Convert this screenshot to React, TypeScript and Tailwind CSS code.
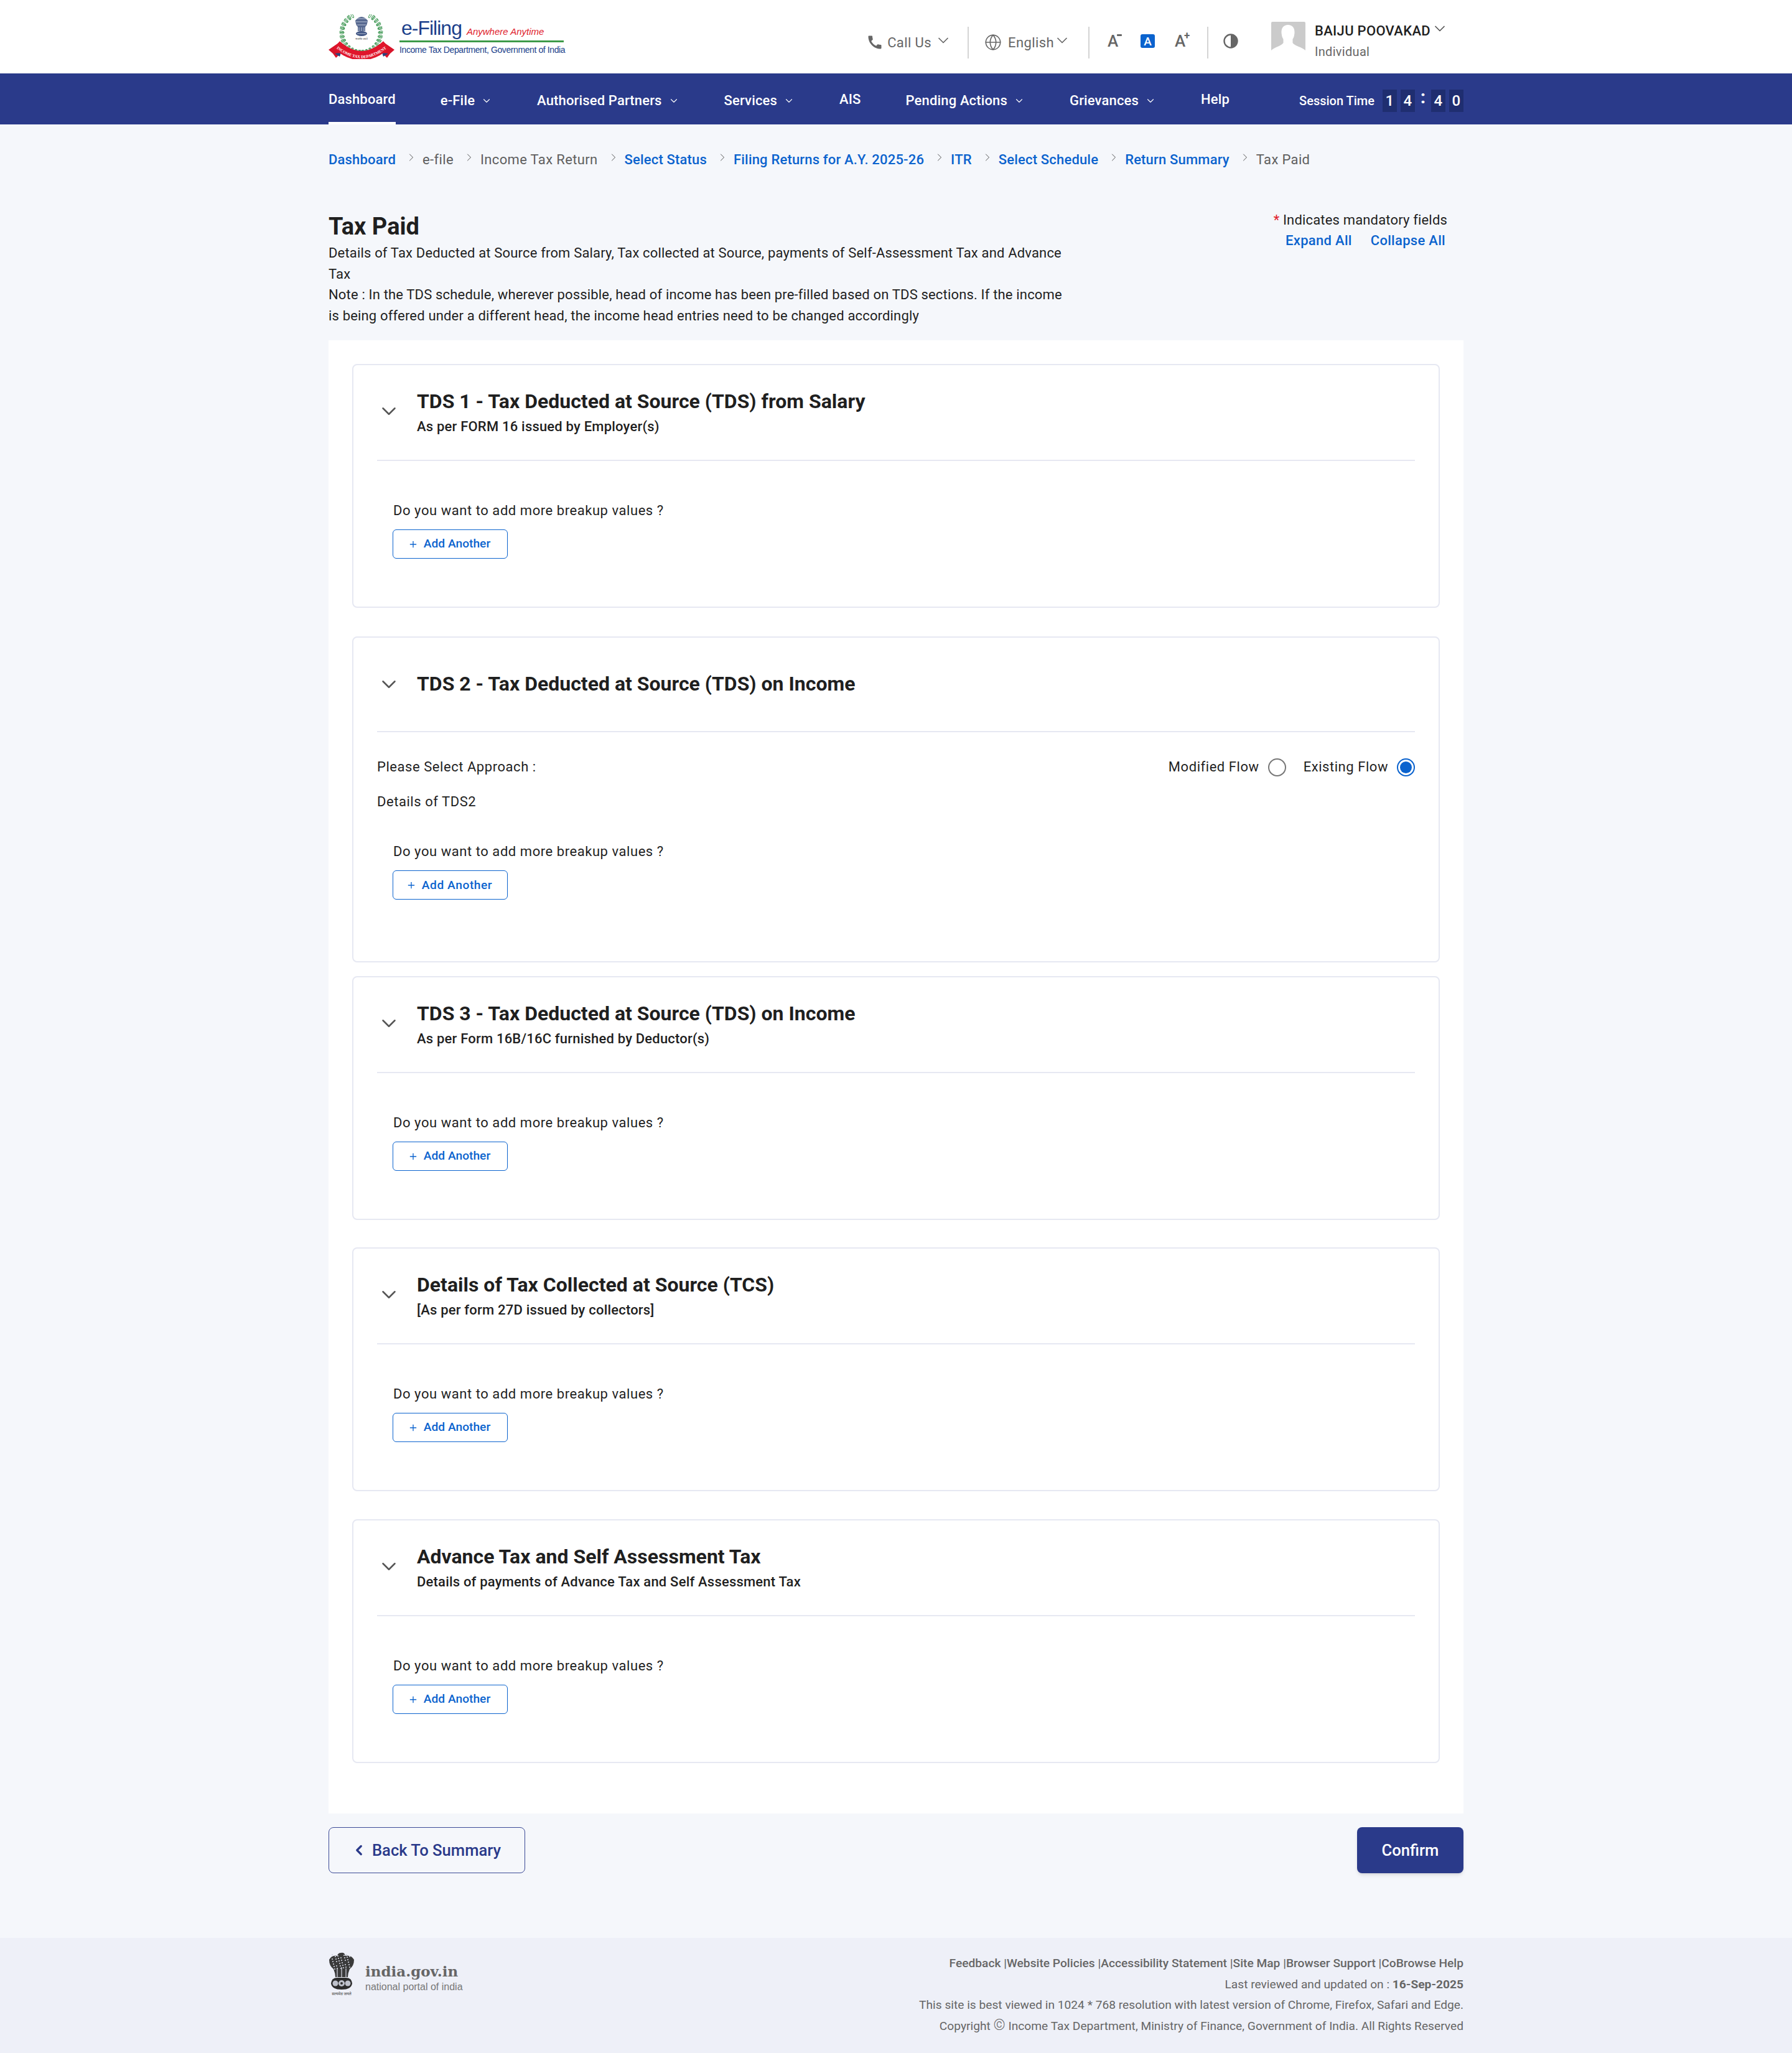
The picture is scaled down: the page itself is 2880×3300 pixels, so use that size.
import { ChevronDown, ChevronLeft, ChevronRight, Globe, Plus } from 'lucide-react';
import { MdCall } from 'react-icons/md';

// ============================================
// Logos
// ============================================

const wreathLeaves = Array.from({ length: 26 }, (_, i) => {
  const side = i < 13 ? -1 : 1;
  const step = i % 13;
  const angle = ((12 + step * 12.5) * Math.PI) / 180;
  const r = 31;
  return {
    x: 52.5 + side * r * Math.sin(angle + 0.35),
    y: 27 - r * Math.cos(angle + 0.35) + 3,
    rot: side * (step * 12.5 + 30),
    key: i,
  };
});

const DeptEmblem = () => (
  <svg width="106" height="72" viewBox="0 0 106 72" className="shrink-0">
    {wreathLeaves.map((l) => (
      <g key={l.key} transform={`translate(${l.x} ${l.y}) rotate(${l.rot})`}>
        <ellipse cx="-2.6" cy="0" rx="1.4" ry="3.6" fill="none" stroke="#2f8f46" strokeWidth="0.9" />
        <ellipse cx="2.6" cy="0" rx="1.4" ry="3.6" fill="none" stroke="#2f8f46" strokeWidth="0.9" />
      </g>
    ))}
    <path d="M43 10 Q53 -2 63 10 Q62 18 59 20 L59 27 L47 27 L47 20 Q44 18 43 10Z" fill="#56688f" />
    <path d="M46 7h14M44 12h18M46 17h14M49 21v6M53 21v6M57 21v6" stroke="#c7cfe0" strokeWidth="0.9" />
    <ellipse cx="53" cy="31" rx="9" ry="4" fill="#3f5483" />
    <path d="M46 31h14" stroke="#c7cfe0" strokeWidth="0.9" />
    <text x="53" y="41" textAnchor="middle" fontSize="4" fill="#555" fontFamily="'Noto Sans', sans-serif">
      सत्यमेव जयते
    </text>
    <path d="M0 57 L16 46 L20 62 L12 70 L7 63Z" fill="#d8142a" />
    <path d="M106 57 L90 46 L86 62 L94 70 L99 63Z" fill="#d8142a" />
    <path d="M10 63 L20 62 L18 68Z" fill="#27457f" />
    <path d="M96 63 L86 62 L88 68Z" fill="#27457f" />
    <path d="M13 49 Q53 84 93 49" fill="none" stroke="#e0162b" strokeWidth="15" />
    <path id="dept-ribbon-text" d="M6 49 Q53 92 100 49" fill="none" />
    <text fontSize="6.4" fontWeight="700" fill="#fff" fontFamily="'Liberation Serif', serif">
      <textPath href="#dept-ribbon-text" startOffset="50%" textAnchor="middle">
        INCOME TAX DEPARTMENT
      </textPath>
    </text>
  </svg>
);

const lionDots = Array.from({ length: 34 }, (_, i) => ({
  x: 6 + ((i * 7) % 29),
  y: 4 + ((i * 11) % 24),
  key: i,
}));

const NationalEmblem = () => (
  <svg width="42" height="70" viewBox="0 0 42 70" className="shrink-0">
    <path
      d="M20 1 Q26 0 27 6 Q36 4 41 12 Q41 22 34 27 Q31 34 31 40 L11 40 Q11 34 8 27 Q1 22 1 12 Q6 4 14 6 Q15 1 20 1Z"
      fill="#3a3a3a"
    />
    {lionDots.map((d) => (
      <circle key={d.key} cx={d.x} cy={d.y} r="1.1" fill="#cfd2db" />
    ))}
    <path d="M14 26v14M21 24v16M28 26v14" stroke="#d8dae4" strokeWidth="1.2" />
    <path d="M4 50 Q5 41 14 41 L28 41 Q37 41 38 50 Q37 60 21 60 Q5 60 4 50Z" fill="#2d2d2d" />
    <circle cx="11" cy="50" r="4.5" fill="#bfc2cc" />
    <circle cx="21" cy="50" r="5" fill="#bfc2cc" />
    <circle cx="31" cy="50" r="4.5" fill="#bfc2cc" />
    <circle cx="21" cy="50" r="2" fill="#333" />
    <text x="21" y="69" textAnchor="middle" fontSize="6.5" fill="#444" fontFamily="'Noto Sans', sans-serif">
      सत्यमेव जयते
    </text>
  </svg>
);

const Avatar = () => (
  <svg width="55" height="55" viewBox="0 0 55 55" className="shrink-0 -mt-[11px]">
    <path d="M2 0 H53 Q55 0 55 2 V52 L0 52 V2 Q0 0 2 0Z" fill="#cbcbcb" />
    <path
      d="M27 5 C20 5 16 10 16.5 18 C17 23 18 26 19.5 28 L19.5 34 C16 39 5 41 0 46 L0 55 L55 55 L55 46 C50 41 38 39 34.5 34 L34.5 28 C36 26 37 23 37.5 18 C38 10 34 5 27 5Z"
      fill="#fff"
    />
  </svg>
);

const ContrastIcon = () => (
  <svg width="24" height="24" viewBox="0 0 24 24" className="shrink-0">
    <circle cx="12" cy="12" r="10.5" fill="#fff" stroke="#666" strokeWidth="2.4" />
    <path d="M12 1.5 A10.5 10.5 0 0 1 12 22.5Z" fill="#666" />
  </svg>
);

// ============================================
// Top header
// ============================================

const Separator = () => <div className="w-[2px] h-[51px] bg-[#d4d4d4] shrink-0" />;

const TopBar = () => (
  <header className="h-[118px] bg-white">
    <div className="w-[1824px] mx-auto h-full flex items-center">
      <div className="flex items-center mt-[-1px]">
        <DeptEmblem />
        <div className="ml-[8px] w-[264px] flex flex-col font-['Liberation_Sans',sans-serif]">
          <div className="flex items-baseline pl-[3px] h-[34px]">
            <span className="text-[32px] leading-[34px] tracking-[-1px] text-[#1b3f8b]">e-Filing</span>
            <span className="ml-[8px] text-[15px] italic text-[#e01b2b]">Anywhere Anytime</span>
          </div>
          <div className="h-[3px] bg-[#3d9a48] mt-[3px]" />
          <div className="text-[14px] leading-[20px] tracking-[-0.4px] mt-[2px] text-[#1b3f8b] whitespace-nowrap">
            Income Tax Department, Government of India
          </div>
        </div>
      </div>

      <div className="ml-auto flex items-center mt-[18px] text-[#666] text-[22px] tracking-[0.4px]">
        <MdCall size={28} className="text-[#666] mr-[6px]" />
        <span>Call Us</span>
        <ChevronDown size={28} strokeWidth={1.5} className="ml-[5px] mr-[25px] -mt-[6px]" />
        <Separator />
        <Globe size={28} strokeWidth={1.4} className="ml-[25px] mr-[10px]" />
        <span>English</span>
        <ChevronDown size={28} strokeWidth={1.5} className="-ml-[1px] mr-[28px] -mt-[6px]" />
        <Separator />
        <span className="ml-[29px] w-[24px] text-[26px] leading-[28px] tracking-normal font-medium relative -mt-[4px]">
          A<span className="absolute left-[15px] top-[3px] w-[8px] h-[3px] bg-[#666] rounded-[1px]" />
        </span>
        <span className="ml-[29px] w-[23px] h-[22px] bg-[#0b63ce] rounded-[3px] text-white text-[19px] leading-[23px] tracking-normal text-center font-medium -mt-[4px]">
          A
        </span>
        <span className="ml-[32px] w-[24px] text-[26px] leading-[28px] tracking-normal font-medium relative -mt-[4px]">
          A<span className="absolute left-[15px] top-[-3px] text-[17px] leading-[17px] font-bold">+</span>
        </span>
        <span className="w-[28px]" />
        <Separator />
        <span className="ml-[24px] -mt-[4px]">
          <ContrastIcon />
        </span>
        <span className="ml-[53px]">
          <Avatar />
        </span>
        <div className="ml-[15px] w-[239px] flex flex-col -mt-[5px] tracking-[0.3px]">
          <div className="flex items-center h-[30px] text-[#1f1f1f] font-medium text-[22px] whitespace-nowrap">
            BAIJU POOVAKAD
            <ChevronDown size={28} strokeWidth={1.5} className="ml-[1px] -mt-[6px] text-[#555]" />
          </div>
          <div className="text-[20px] leading-[28px] mt-[5px] text-[#666]">Individual</div>
        </div>
      </div>
    </div>
  </header>
);

// ============================================
// Main nav
// ============================================

const navItems = [
  { label: 'Dashboard', active: true },
  { label: 'e-File', caret: true },
  { label: 'Authorised Partners', caret: true },
  { label: 'Services', caret: true },
  { label: 'AIS' },
  { label: 'Pending Actions', caret: true },
  { label: 'Grievances', caret: true },
  { label: 'Help' },
];

const Digit = ({ value, className = '' }: { value: string; className?: string }) => (
  <span
    className={`w-[23px] h-[36px] bg-[#1f2e70] text-[24px] leading-[36px] text-center font-medium ${className}`}
  >
    {value}
  </span>
);

const NavBar = () => (
  <nav className="h-[82px] bg-[#2a3a8a]">
    <div className="w-[1824px] mx-auto h-full flex items-stretch text-white font-medium text-[22px] tracking-[0.15px]">
      <div className="flex items-stretch gap-[72px]">
        {navItems.map((item) => (
          <div
            key={item.label}
            className={
              item.active
                ? 'flex items-center border-b-[4px] border-white pt-[4px]'
                : item.caret
                  ? 'flex items-center pt-[5px]'
                  : 'flex items-center'
            }
          >
            <span>{item.label}</span>
            {item.caret && <ChevronDown size={18} strokeWidth={1.5} className="ml-[10px] mt-[1px]" />}
          </div>
        ))}
      </div>
      <div className="ml-auto flex items-center pt-[6px]">
        <span className="text-[20px] mr-[13px] tracking-normal">Session Time</span>
        <Digit value="1" />
        <Digit value="4" className="ml-[6px]" />
        <span className="w-[26px] text-center text-[30px] font-bold leading-[36px] -mt-[12px]">:</span>
        <Digit value="4" />
        <Digit value="0" className="ml-[6px]" />
      </div>
    </div>
  </nav>
);

// ============================================
// Breadcrumb
// ============================================

const crumbs = [
  { label: 'Dashboard', link: true },
  { label: 'e-file' },
  { label: 'Income Tax Return' },
  { label: 'Select Status', link: true },
  { label: 'Filing Returns for A.Y. 2025-26', link: true },
  { label: 'ITR', link: true },
  { label: 'Select Schedule', link: true },
  { label: 'Return Summary', link: true },
  { label: 'Tax Paid' },
];

const Breadcrumb = () => (
  <div className="h-[112px] flex items-center text-[22px]">
    {crumbs.map((c, i) => (
      <div key={c.label} className="flex items-center">
        {i > 0 && <ChevronRight size={20} strokeWidth={1.2} className="ml-[15px] mr-[8px] -mt-[6px] text-[#555]" />}
        <span className={c.link ? 'text-[#0b63ce] font-medium tracking-[0.18px]' : 'text-[#5f5f5f] tracking-[0.35px]'}>
          {c.label}
        </span>
      </div>
    ))}
  </div>
);

// ============================================
// Schedule cards
// ============================================

const AddAnother = () => (
  <>
    <p className="text-[22px] leading-[34px] tracking-[0.55px] text-[#1f1f1f]">Do you want to add more breakup values ?</p>
    <button className="-ml-[1px] mt-[13px] w-[185px] h-[47px] pr-[3px] border-[1.5px] border-[#0b63ce] rounded-[6px] bg-white flex items-center justify-center text-[#0b63ce] text-[19.2px] font-medium">
      <Plus size={16} strokeWidth={2} className="mr-[9px]" />
      Add Another
    </button>
  </>
);

interface ScheduleCardProps {
  title: string;
  subtitle?: string;
  className?: string;
}

const ScheduleCard = ({ title, subtitle, className = '' }: ScheduleCardProps) => (
  <section className={`border-2 border-[#e6e8f2] rounded-[8px] h-[392px] ${className}`}>
    <div className="mx-[38px] h-[154px] border-b-2 border-[#e6e8f2] flex items-center">
      <ChevronDown size={38} strokeWidth={1.6} className="text-[#555] -mt-[4px]" />
      <div className="ml-[26px] pt-[2px]">
        <h2 className="text-[32px] leading-[40px] font-bold text-[#1f1f1f]">{title}</h2>
        <p className="mt-[4px] text-[22px] leading-[34px] tracking-[0.2px] font-medium text-[#1f1f1f]">{subtitle}</p>
      </div>
    </div>
    <div className="pl-[64px] pt-[63px]">
      <AddAnother />
    </div>
  </section>
);

const Tds2Card = () => (
  <section className="border-2 border-[#e6e8f2] rounded-[8px] h-[524px] mt-[46px] mb-[22px]">
    <div className="mx-[38px] h-[152px] border-b-2 border-[#e6e8f2] flex items-center">
      <ChevronDown size={38} strokeWidth={1.6} className="text-[#555]" />
      <h2 className="ml-[26px] -mt-[2px] text-[32px] leading-[40px] font-bold text-[#1f1f1f]">
        TDS 2 - Tax Deducted at Source (TDS) on Income
      </h2>
    </div>
    <div className="mx-[38px] pt-[39px] text-[22px] leading-[34px] tracking-[0.55px] text-[#1f1f1f]">
      <div className="flex items-center">
        <span>Please Select Approach :</span>
        <div className="ml-auto flex items-center">
          <span>Modified Flow</span>
          <span className="ml-[14px] w-[29px] h-[29px] rounded-full border-2 border-[#777] bg-white" />
          <span className="ml-[28px]">Existing Flow</span>
          <span className="ml-[14px] w-[29px] h-[29px] rounded-full border-2 border-[#0b63ce] bg-white flex items-center justify-center">
            <span className="w-[19px] h-[19px] rounded-full bg-[#0b63ce]" />
          </span>
        </div>
      </div>
      <p className="mt-[22px]">Details of TDS2</p>
      <div className="pl-[26px] pt-[46px]">
        <AddAnother />
      </div>
    </div>
  </section>
);

// ============================================
// Footer
// ============================================

const Footer = () => (
  <footer className="h-[185px] bg-[#eef0f8]">
    <div className="w-[1824px] mx-auto flex justify-between">
      <div className="flex items-start pt-[23px]">
        <NationalEmblem />
        <div className="ml-[17px] pt-[16px]">
          <div className="font-['DejaVu_Serif',serif] font-bold text-[23px] leading-[30px] text-[#666]">india.gov.in</div>
          <div className="font-['Liberation_Sans',sans-serif] text-[16px] leading-[20px] text-[#777]">
            national portal of india
          </div>
        </div>
      </div>
      <div className="pt-[24px] text-right text-[19.2px] leading-[33.6px] text-[#666]">
        <p className="font-medium">
          Feedback |Website Policies |Accessibility Statement |Site Map |Browser Support |CoBrowse Help
        </p>
        <p>
          Last reviewed and updated on : <span className="font-bold">16-Sep-2025</span>
        </p>
        <p>This site is best viewed in 1024 * 768 resolution with latest version of Chrome, Firefox, Safari and Edge.</p>
        <p>
          Copyright <span className="text-[24px] leading-none font-light">©</span> Income Tax Department, Ministry of
          Finance, Government of India. All Rights Reserved
        </p>
      </div>
    </div>
  </footer>
);

// ============================================
// Page
// ============================================

export default function App() {
  return (
    <div className="min-h-[3300px] bg-[#f5f7fb] font-['Roboto',sans-serif] flex flex-col">
      <TopBar />
      <NavBar />
      <main className="w-[1824px] mx-auto flex-1">
        <Breadcrumb />
        <div className="flex justify-between pt-[29px]">
          <div className="w-[1200px] text-[22px] leading-[33.6px] tracking-[0.17px] text-[#1f1f1f]">
            <h1 className="text-[38px] leading-[46px] tracking-normal font-bold">Tax Paid</h1>
            <p className="mt-[3px]">
              Details of Tax Deducted at Source from Salary, Tax collected at Source, payments of Self-Assessment Tax and
              Advance Tax
            </p>
            <p>
              Note : In the TDS schedule, wherever possible, head of income has been pre-filled based on TDS sections. If the
              income is being offered under a different head, the income head entries need to be changed accordingly
            </p>
          </div>
          <div className="-mt-[4px] pr-[26px] text-right text-[22px] leading-[33px] tracking-[0.17px]">
            <p className="text-[#1f1f1f]">
              <span className="text-[#e01b2b]">*</span> Indicates mandatory fields
            </p>
            <p className="pr-[3px] font-medium tracking-[0.3px] text-[#0b63ce]">
              Expand All<span className="ml-[30px]">Collapse All</span>
            </p>
          </div>
        </div>

        <div className="mt-[23px] h-[2368px] bg-white px-[38px] pt-[38px]">
          <ScheduleCard
            title="TDS 1 - Tax Deducted at Source (TDS) from Salary"
            subtitle="As per FORM 16 issued by Employer(s)"
          />
          <Tds2Card />
          <ScheduleCard
            title="TDS 3 - Tax Deducted at Source (TDS) on Income"
            subtitle="As per Form 16B/16C furnished by Deductor(s)"
          />
          <ScheduleCard
            title="Details of Tax Collected at Source (TCS)"
            subtitle="[As per form 27D issued by collectors]"
            className="mt-[44px]"
          />
          <ScheduleCard
            title="Advance Tax and Self Assessment Tax"
            subtitle="Details of payments of Advance Tax and Self Assessment Tax"
            className="mt-[45px]"
          />
        </div>

        <div className="mt-[22px] flex justify-between">
          <button className="w-[316px] h-[74px] border-[1.5px] border-[#3b4a96] rounded-[8px] flex items-center justify-center pr-[3px] text-[#2a3a8a] text-[25.6px] font-medium">
            <ChevronLeft size={26} strokeWidth={3} className="mr-[8px]" />
            Back To Summary
          </button>
          <button className="w-[171px] h-[74px] bg-[#2a3a8a] rounded-[8px] shadow-md text-white text-[25.6px] font-medium">
            Confirm
          </button>
        </div>
      </main>
      <Footer />
    </div>
  );
}
